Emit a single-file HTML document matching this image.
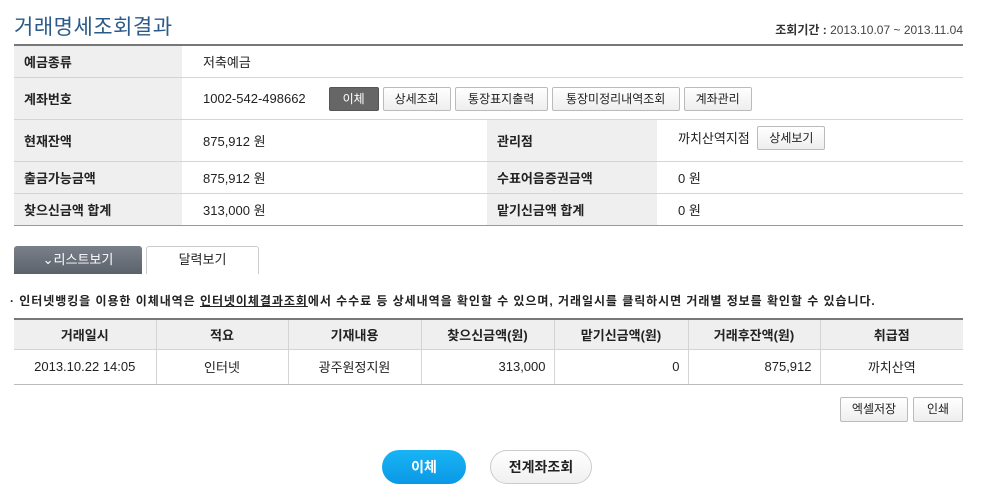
<!DOCTYPE html><html><head><meta charset="utf-8"><style>
*{margin:0;padding:0;box-sizing:border-box}
body{width:990px;height:497px;background:#fff;font-family:"Liberation Sans","Noto Sans CJK KR",sans-serif;font-size:13px;color:#222;position:relative;overflow:hidden}
.a{position:absolute}
.title{left:14px;top:11px;font-size:21px;color:#2a5a8a;letter-spacing:0.5px}
.period{right:27px;top:21px;font-size:12px;color:#444}
.period b{color:#333}
.row{position:absolute;left:14px;width:949px;border-bottom:1px solid #d4d4d4}
.lab{position:absolute;background:#efefef;font-weight:bold;font-size:13px;padding-left:10px;display:flex;align-items:center;height:100%;top:0}
.val{position:absolute;top:0;height:100%;display:flex;align-items:center;font-size:13px}
.btn{display:inline-block;border:1px solid #bbb;border-radius:2px;background:linear-gradient(#fff,#eee);font-size:12px;height:24px;line-height:22px;margin-left:4px;color:#222;text-align:center}
.btn.dk{background:#666;color:#fff;border-color:#555}
table{position:absolute;left:14px;top:318px;width:949px;border-collapse:collapse;font-size:13px}
th{background:#efefef;height:30px;font-weight:bold;border-top:2px solid #777;border-left:1px solid #d4d4d4;border-bottom:1px solid #d4d4d4}
td{height:35px;border-left:1px solid #d4d4d4;border-bottom:1px solid #bbb;text-align:center}
th:first-child,td:first-child{border-left:none}
td.r{text-align:right;padding-right:8px}
</style></head><body>
<div class="a title">거래명세조회결과</div>
<div class="a period"><b>조회기간 :</b> 2013.10.07 ~ 2013.11.04</div>
<div class="a" style="left:14px;top:44px;width:949px;height:2px;background:#777"></div>
<div class="row" style="top:46px;height:32px"><div class="lab" style="left:0;width:168px">예금종류</div><div class="val" style="left:189px">저축예금</div></div>
<div class="row" style="top:78px;height:42px"><div class="lab" style="left:0;width:168px">계좌번호</div><div class="val" style="left:189px">1002-542-498662<span class="btn dk" style="margin-left:23px;width:50px">이체</span><span class="btn" style="width:68px">상세조회</span><span class="btn" style="width:93px">통장표지출력</span><span class="btn" style="width:128px">통장미정리내역조회</span><span class="btn" style="width:68px">계좌관리</span></div></div>
<div class="row" style="top:120px;height:42px"><div class="lab" style="left:0;width:168px">현재잔액</div><div class="val" style="left:189px">875,912 원</div><div class="lab" style="left:473px;width:170px">관리점</div><div class="val" style="left:664px;top:-3px">까치산역지점&nbsp;<span class="btn" style="width:68px">상세보기</span></div></div>
<div class="row" style="top:162px;height:32px"><div class="lab" style="left:0;width:168px">출금가능금액</div><div class="val" style="left:189px">875,912 원</div><div class="lab" style="left:473px;width:170px">수표어음증권금액</div><div class="val" style="left:664px">0 원</div></div>
<div class="row" style="top:194px;height:32px;border-bottom-color:#999"><div class="lab" style="left:0;width:168px">찾으신금액 합계</div><div class="val" style="left:189px">313,000 원</div><div class="lab" style="left:473px;width:170px">맡기신금액 합계</div><div class="val" style="left:664px">0 원</div></div>
<div class="a" style="left:14px;top:246px;width:128px;height:28px;background:linear-gradient(#7a808a,#5c626c);color:#fff;border-radius:3px 3px 0 0;text-align:center;line-height:27px;font-size:13px">⌄리스트보기</div>
<div class="a" style="left:146px;top:246px;width:113px;height:28px;border:1px solid #ccc;border-bottom:none;border-radius:3px 3px 0 0;text-align:center;line-height:26px;font-size:13px">달력보기</div>
<div class="a" style="left:10px;top:292px;font-size:12px;font-weight:bold;color:#222;letter-spacing:0.95px;white-space:nowrap">· 인터넷뱅킹을 이용한 이체내역은 <u>인터넷이체결과조회</u>에서 수수료 등 상세내역을 확인할 수 있으며, 거래일시를 클릭하시면 거래별 정보를 확인할 수 있습니다.</div>
<table><tr><th style="width:142px">거래일시</th><th style="width:132px">적요</th><th style="width:133px">기재내용</th><th style="width:133px">찾으신금액(원)</th><th style="width:134px">맡기신금액(원)</th><th style="width:132px">거래후잔액(원)</th><th>취급점</th></tr>
<tr><td>2013.10.22 14:05</td><td>인터넷</td><td>광주원정지원</td><td class="r">313,000</td><td class="r">0</td><td class="r">875,912</td><td>까치산역</td></tr></table>
<div class="a btn" style="left:836px;top:397px;height:25px;line-height:23px;width:68px">엑셀저장</div>
<div class="a btn" style="left:909px;top:397px;height:25px;line-height:23px;width:50px">인쇄</div>
<div class="a" style="left:382px;top:450px;width:84px;height:34px;border-radius:17px;background:linear-gradient(#19b4f5,#0b98e6);color:#fff;font-weight:bold;text-align:center;line-height:34px;font-size:14px">이체</div>
<div class="a" style="left:490px;top:450px;width:102px;height:34px;border-radius:17px;border:1px solid #ccc;background:linear-gradient(#fff,#f0f0f0);font-weight:bold;text-align:center;line-height:32px;font-size:14px">전계좌조회</div>
</body></html>
